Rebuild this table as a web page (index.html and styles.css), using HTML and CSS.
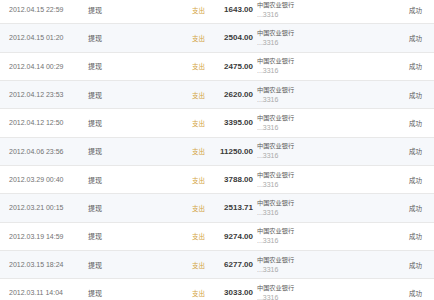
FILE: index.html
```html
<!DOCTYPE html>
<html lang="zh">
<head>
<meta charset="utf-8">
<link rel="stylesheet" href="styles.css">
</head>
<body>
<div class="list">
  <div class="row"><span class="date">2012.04.15 22:59</span><span class="type">提现</span><span class="dir">支出</span><span class="amt">1643.00</span><span class="bank"><span class="bname">中国农业银行</span><span class="acct">...3316</span></span><span class="status">成功</span></div>
  <div class="row"><span class="date">2012.04.15 01:20</span><span class="type">提现</span><span class="dir">支出</span><span class="amt">2504.00</span><span class="bank"><span class="bname">中国农业银行</span><span class="acct">...3316</span></span><span class="status">成功</span></div>
  <div class="row"><span class="date">2012.04.14 00:29</span><span class="type">提现</span><span class="dir">支出</span><span class="amt">2475.00</span><span class="bank"><span class="bname">中国农业银行</span><span class="acct">...3316</span></span><span class="status">成功</span></div>
  <div class="row"><span class="date">2012.04.12 23:53</span><span class="type">提现</span><span class="dir">支出</span><span class="amt">2620.00</span><span class="bank"><span class="bname">中国农业银行</span><span class="acct">...3316</span></span><span class="status">成功</span></div>
  <div class="row"><span class="date">2012.04.12 12:50</span><span class="type">提现</span><span class="dir">支出</span><span class="amt">3395.00</span><span class="bank"><span class="bname">中国农业银行</span><span class="acct">...3316</span></span><span class="status">成功</span></div>
  <div class="row"><span class="date">2012.04.06 23:56</span><span class="type">提现</span><span class="dir">支出</span><span class="amt">11250.00</span><span class="bank"><span class="bname">中国农业银行</span><span class="acct">...3316</span></span><span class="status">成功</span></div>
  <div class="row"><span class="date">2012.03.29 00:40</span><span class="type">提现</span><span class="dir">支出</span><span class="amt">3788.00</span><span class="bank"><span class="bname">中国农业银行</span><span class="acct">...3316</span></span><span class="status">成功</span></div>
  <div class="row"><span class="date">2012.03.21 00:15</span><span class="type">提现</span><span class="dir">支出</span><span class="amt">2513.71</span><span class="bank"><span class="bname">中国农业银行</span><span class="acct">...3316</span></span><span class="status">成功</span></div>
  <div class="row"><span class="date">2012.03.19 14:59</span><span class="type">提现</span><span class="dir">支出</span><span class="amt">9274.00</span><span class="bank"><span class="bname">中国农业银行</span><span class="acct">...3316</span></span><span class="status">成功</span></div>
  <div class="row"><span class="date">2012.03.15 18:24</span><span class="type">提现</span><span class="dir">支出</span><span class="amt">6277.00</span><span class="bank"><span class="bname">中国农业银行</span><span class="acct">...3316</span></span><span class="status">成功</span></div>
  <div class="row"><span class="date">2012.03.11 14:04</span><span class="type">提现</span><span class="dir">支出</span><span class="amt">3033.00</span><span class="bank"><span class="bname">中国农业银行</span><span class="acct">...3316</span></span><span class="status">成功</span></div>
</div>
</body>
</html>
```

FILE: styles.css
```css
html, body {
  margin: 0;
  padding: 0;
  background: #fff;
  overflow: hidden;
}
body {
  font-family: "Liberation Sans", "Noto Sans CJK SC", sans-serif;
  color: #555;
}
.list {
  margin-top: -4px;
}
.row {
  display: grid;
  grid-template-columns: 79px 104px 20px 41px 156px auto;
  align-items: center;
  height: 27.33px;
  padding-left: 9px;
  border-bottom: 1px solid #e8e8e8;
  background: #fff;
}
.row:nth-child(even) {
  background: #f6f8fb;
}
.date {
  font-size: 7px;
  color: #727272;
  white-space: nowrap;
}
.type {
  font-size: 7px;
  color: #555;
}
.dir {
  font-size: 6.5px;
  color: #d4a545;
  white-space: nowrap;
}
.amt {
  font-size: 8px;
  font-weight: bold;
  color: #3a3a3a;
  text-align: right;
  white-space: nowrap;
}
.bank {
  display: flex;
  flex-direction: column;
  padding-left: 4px;
  line-height: 10px;
}
.bname {
  font-size: 6.2px;
  color: #5a5a5a;
  white-space: nowrap;
}
.acct {
  font-size: 7px;
  color: #aaa;
}
.status {
  font-size: 6.5px;
  color: #5a5a5a;
  white-space: nowrap;
}
```
